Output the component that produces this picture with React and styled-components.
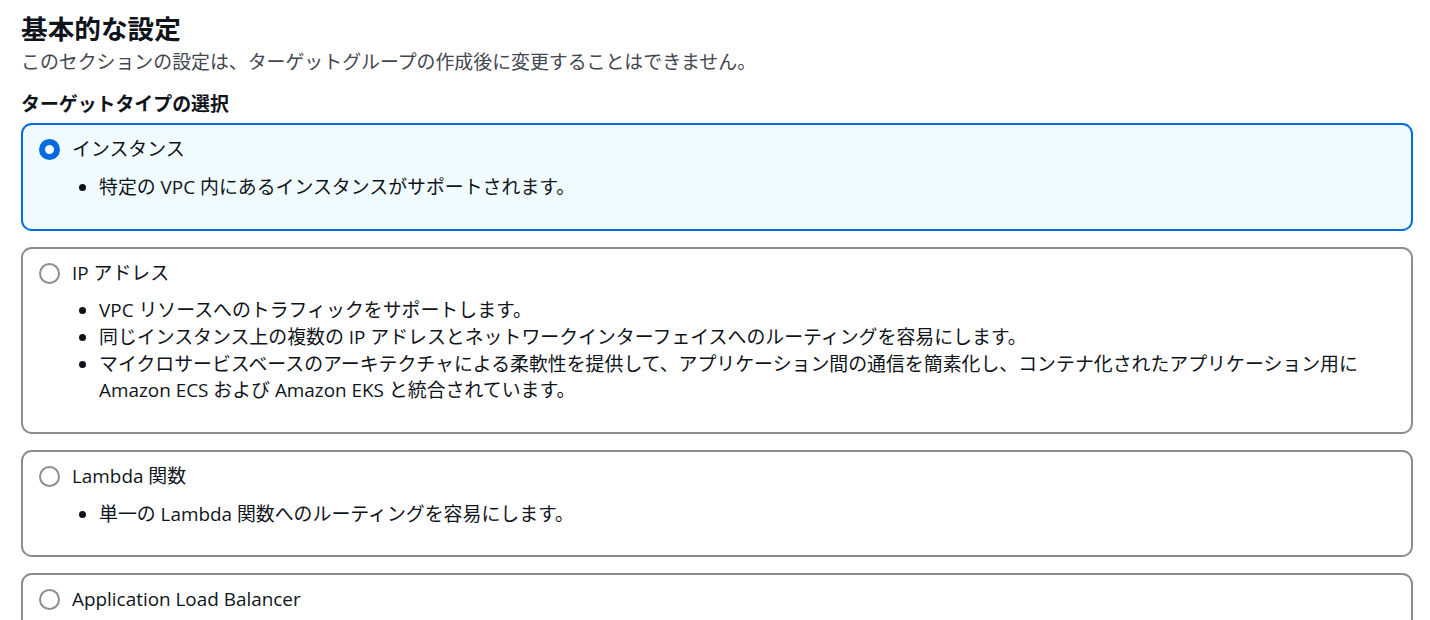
import React, { useState } from "react";
import styled, { createGlobalStyle } from "styled-components";

const GlobalStyle = createGlobalStyle`
  body {
    margin: 0;
    background: #ffffff;
    font-family: "Open Sans", "Noto Sans CJK JP", sans-serif;
    color: #0f141a;
  }
`;

const Page = styled.div`
  padding: 13px 17px 0 21px;
`;

const Heading = styled.h2`
  margin: 0;
  font-size: 26.67px;
  line-height: 32px;
  font-weight: 700;
  color: #0f141a;
`;

const Subtitle = styled.p`
  margin: 4px 0 0;
  font-size: 18.9px;
  line-height: 26.67px;
  color: #424650;
`;

const FieldLabel = styled.div`
  margin-top: 15px;
  font-size: 18.9px;
  line-height: 26.67px;
  font-weight: 700;
  color: #0f141a;
`;

const TileList = styled.div`
  margin-top: 6px;
  display: flex;
  flex-direction: column;
  gap: 16px;
`;

const Tile = styled.label`
  display: block;
  border: 2px solid ${({ selected }) => (selected ? "#006ce0" : "#8c8c94")};
  background: ${({ selected }) => (selected ? "#f0fbff" : "#ffffff")};
  border-radius: 10.67px;
  padding: 11px 16px 28px;
  cursor: pointer;
`;

const TileHeader = styled.div`
  display: flex;
  align-items: center;
  gap: 12px;
  font-size: 18.9px;
  line-height: 26.67px;
`;

const Radio = styled.span`
  flex: none;
  width: 21px;
  height: 21px;
  border-radius: 50%;
  box-sizing: border-box;
  border: ${({ checked }) =>
    checked ? "6.5px solid #006ce0" : "2px solid #8c8c94"};
  background: #ffffff;
`;

const Bullets = styled.ul`
  margin: 11px 0 0;
  padding-left: 60px;
  font-size: 18.9px;
  line-height: 26.67px;
  color: #0f141a;
`;

const tiles = [
  {
    id: "instance",
    label: "インスタンス",
    items: ["特定の VPC 内にあるインスタンスがサポートされます。"],
  },
  {
    id: "ip",
    label: "IP アドレス",
    items: [
      "VPC リソースへのトラフィックをサポートします。",
      "同じインスタンス上の複数の IP アドレスとネットワークインターフェイスへのルーティングを容易にします。",
      "マイクロサービスベースのアーキテクチャによる柔軟性を提供して、アプリケーション間の通信を簡素化し、コンテナ化されたアプリケーション用に Amazon ECS および Amazon EKS と統合されています。",
    ],
  },
  {
    id: "lambda",
    label: "Lambda 関数",
    items: ["単一の Lambda 関数へのルーティングを容易にします。"],
  },
  {
    id: "alb",
    label: "Application Load Balancer",
    items: [
      "Network Load Balancer が TCP リクエストを受け入れ、特定の Application Load Balancer にルーティングできるようにします。",
    ],
  },
];

export default function App() {
  const [selected, setSelected] = useState("instance");

  return (
    <>
      <GlobalStyle />
      <Page>
        <Heading>基本的な設定</Heading>
        <Subtitle>
          このセクションの設定は、ターゲットグループの作成後に変更することはできません。
        </Subtitle>
        <FieldLabel>ターゲットタイプの選択</FieldLabel>
        <TileList>
          {tiles.map((t) => (
            <Tile
              key={t.id}
              selected={selected === t.id}
              onClick={() => setSelected(t.id)}
            >
              <TileHeader>
                <Radio checked={selected === t.id} />
                {t.label}
              </TileHeader>
              <Bullets>
                {t.items.map((item) => (
                  <li key={item}>{item}</li>
                ))}
              </Bullets>
            </Tile>
          ))}
        </TileList>
      </Page>
    </>
  );
}
